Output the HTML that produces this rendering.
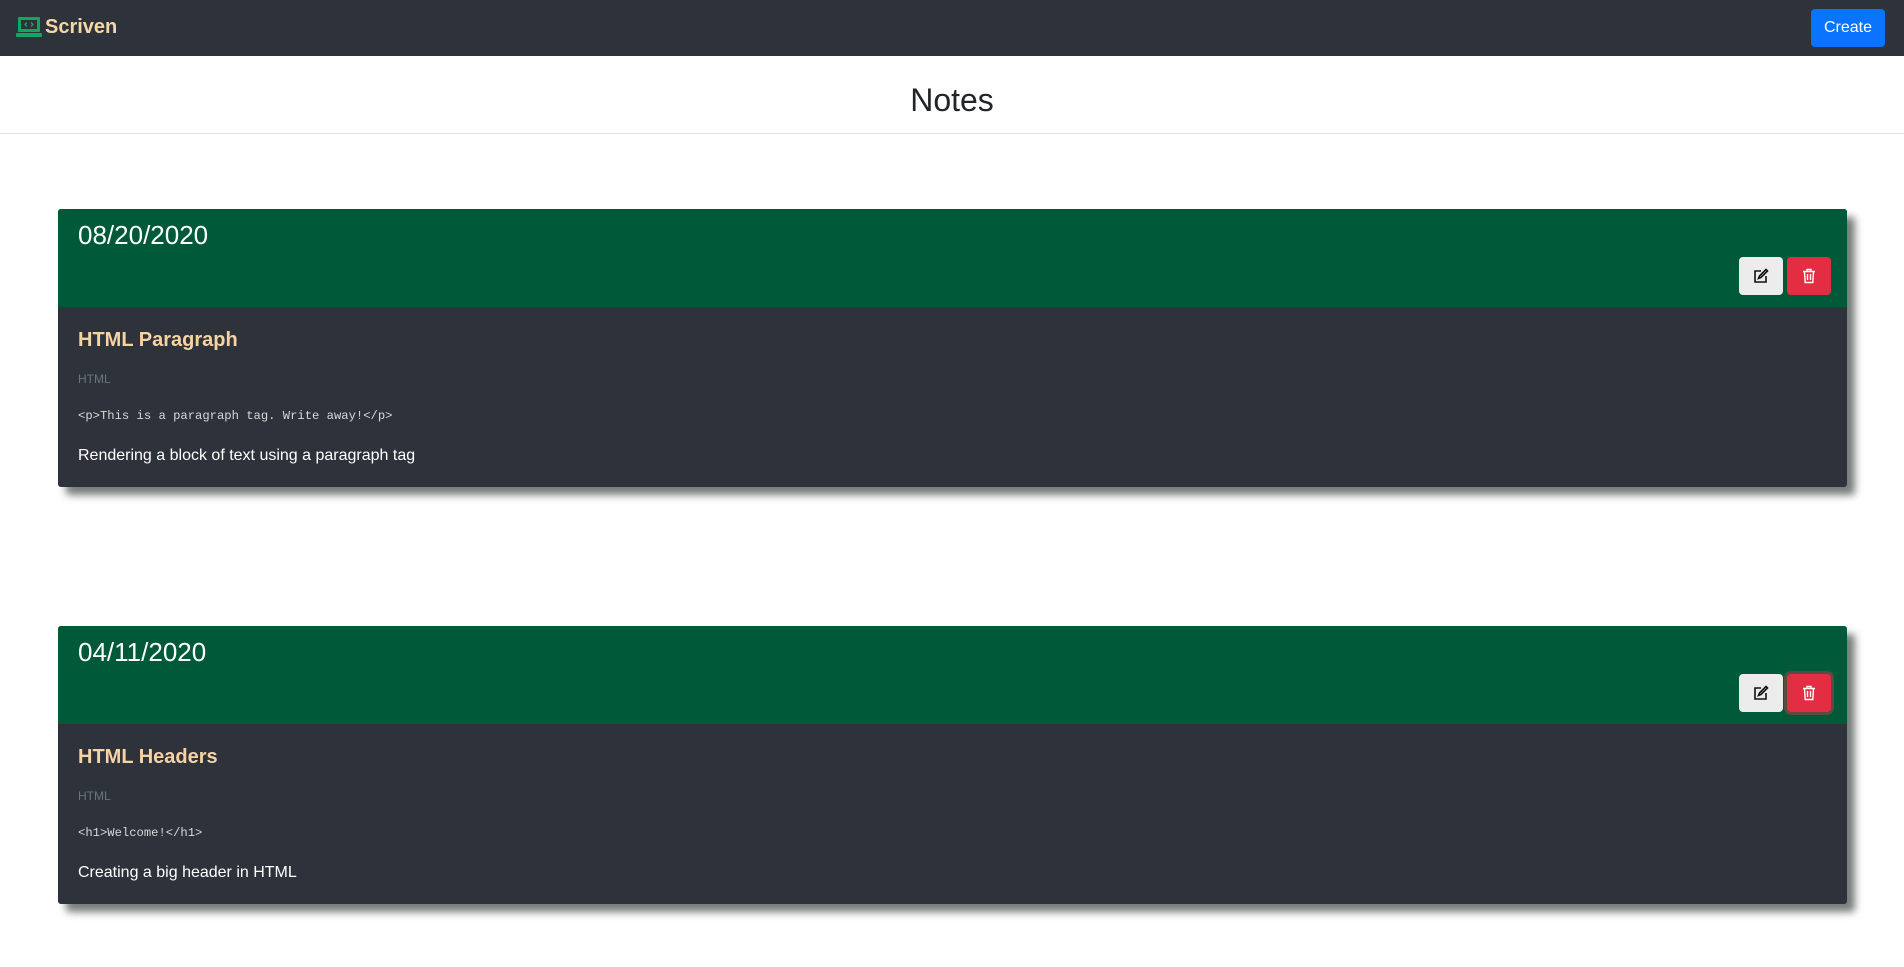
<!DOCTYPE html>
<html><head><meta charset="utf-8"><style>
*{box-sizing:border-box;margin:0;padding:0}
body{width:1904px;height:967px;background:#fff;font-family:"Liberation Sans",sans-serif;position:relative;overflow:hidden}
.nav{position:absolute;left:0;top:0;width:1904px;height:56px;background:#2e323a}
.brand{position:absolute;left:45px;top:15px;font-size:20px;font-weight:bold;color:#f5d7a6;line-height:24px}
.create{position:absolute;left:1811px;top:9px;width:74px;height:38px;background:#0a74ff;border-radius:4px;color:#fff;font-size:16px;line-height:38px;text-align:center}
.title{position:absolute;left:0;width:1904px;top:80px;text-align:center;font-size:32px;color:#212529;line-height:40px;font-weight:500}
.hr{position:absolute;left:0;top:133px;width:1904px;height:1px;background:#dee2e6}
.card{position:absolute;left:58px;width:1789px;background:#2e323a;border-radius:3px;box-shadow:8px 8px 8px rgba(60,70,65,.7)}
.head{position:absolute;left:0;top:0;width:100%;height:98px;background:#005a3a;border-radius:3px 3px 0 0}
.date{position:absolute;left:20px;top:10px;font-size:26px;color:#fff;line-height:32px}
.btn{position:absolute;top:48px;width:44px;height:38px;border-radius:4px}
.e{left:1681px;background:#ececec}.d{left:1729px;background:#e22d42}
.btn svg{position:absolute;left:14px;top:11px}
.t{position:absolute;left:20px;top:120px;font-size:20px;font-weight:bold;color:#f5d3a3;line-height:23px}
.s{position:absolute;left:20px;top:163px;font-size:12px;color:#6c757d;line-height:14px}
.c{position:absolute;left:20px;top:200px;font-family:"Liberation Mono",monospace;font-size:12.2px;color:#d8d8d8;line-height:14px}
.p{position:absolute;left:20px;top:238px;font-size:16px;color:#fff;line-height:18px}
</style></head><body>
<div class="nav">
<svg style="position:absolute;left:16px;top:17px" width="26" height="21" viewBox="0 0 26 21"><rect x="2" y="0" width="22" height="15" rx="1" fill="#10a860"/><rect x="5" y="3" width="16" height="9" fill="#2e323a"/><path d="M11 5.5 9 7.5 11 9.5M15 5.5 17 7.5 15 9.5" stroke="#10a860" stroke-width="1.4" fill="none"/><rect x="0" y="16" width="26" height="4" rx="1" fill="#10a860"/></svg>
<div class="brand">Scriven</div>
<div class="create">Create</div>
</div>
<div class="title">Notes</div>
<div class="hr"></div>

<div class="card" style="top:209px;height:278px">
<div class="head"><div class="date">08/20/2020</div>
<div class="btn e"><svg width="16" height="16" viewBox="0 0 16 16" fill="none" stroke="#111" stroke-width="1.6"><path d="M8 3H2v11h11V8"/><path d="M13 1.5l1.5 1.5L8 9.5 5.5 10.5 6.5 8z"/></svg></div>
<div class="btn d"><svg width="16" height="16" viewBox="0 0 16 16" fill="none" stroke="#fff" stroke-width="1.4"><path d="M2 3.5h12M6 3.5V1.5h4v2M3.5 3.5l.7 11h7.6l.7-11M6.5 6v6M9.5 6v6"/></svg></div>
</div>
<div class="t">HTML Paragraph</div>
<div class="s">HTML</div>
<div class="c">&lt;p&gt;This is a paragraph tag. Write away!&lt;/p&gt;</div>
<div class="p">Rendering a block of text using a paragraph tag</div>
</div>

<div class="card" style="top:626px;height:278px">
<div class="head"><div class="date">04/11/2020</div>
<div class="btn e"><svg width="16" height="16" viewBox="0 0 16 16" fill="none" stroke="#111" stroke-width="1.6"><path d="M8 3H2v11h11V8"/><path d="M13 1.5l1.5 1.5L8 9.5 5.5 10.5 6.5 8z"/></svg></div>
<div class="btn d" style="box-shadow:0 0 0 3px rgba(200,60,70,.45)"><svg width="16" height="16" viewBox="0 0 16 16" fill="none" stroke="#fff" stroke-width="1.4"><path d="M2 3.5h12M6 3.5V1.5h4v2M3.5 3.5l.7 11h7.6l.7-11M6.5 6v6M9.5 6v6"/></svg></div>
</div>
<div class="t">HTML Headers</div>
<div class="s">HTML</div>
<div class="c">&lt;h1&gt;Welcome!&lt;/h1&gt;</div>
<div class="p">Creating a big header in HTML</div>
</div>
</body></html>
